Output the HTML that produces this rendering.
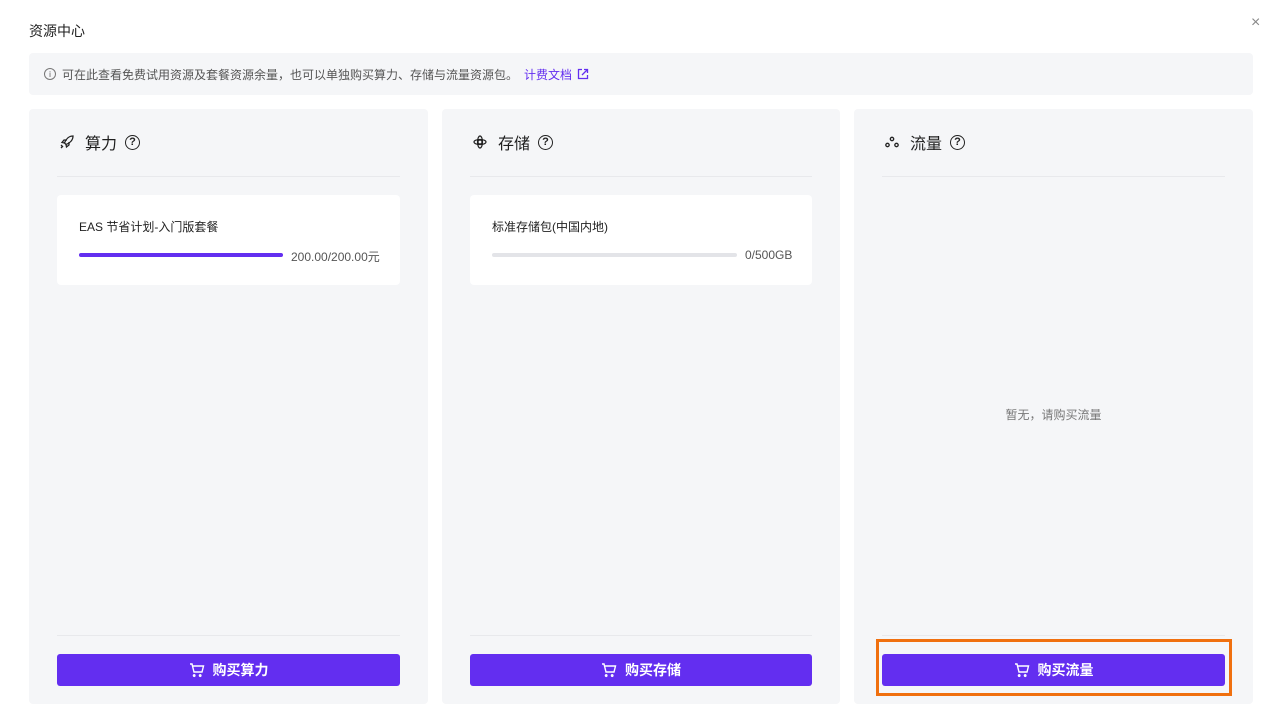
<!DOCTYPE html><html><head><meta charset="utf-8"><style>
*{box-sizing:border-box;margin:0;padding:0}
body{width:1276px;height:713px;background:#fff;font-family:"Liberation Sans","Noto Sans CJK SC",sans-serif;position:relative;overflow:hidden;color:#1f1f1f}
.abs{position:absolute}
.col{position:absolute;top:109px;width:399px;height:595px;background:#f5f6f8;border-radius:4px}
.hd{position:absolute;left:30px;top:21px;font-size:16px;display:flex;align-items:center;gap:10px;height:24px}
.dv{position:absolute;left:28px;right:28px;height:1px;background:#e8e9ec}
.card{position:absolute;left:28px;right:28px;top:86px;height:90px;background:#fff;border-radius:4px}
.btn{position:absolute;left:28px;right:28px;top:545px;height:32px;background:#632ef0;border-radius:3px;color:#fff;font-size:14px;font-weight:bold;display:flex;align-items:center;justify-content:center;gap:8px}
.q{width:15px;height:15px;border:1.5px solid #222;border-radius:50%;font-size:11px;font-weight:bold;display:flex;align-items:center;justify-content:center;margin-left:-2px}
</style></head><body>
<div class="abs" style="left:29px;top:21px;font-size:14px">资源中心</div>
<div class="abs" style="left:1251px;top:14px;font-size:16px;color:#888">×</div>
<div class="abs" style="left:29px;top:53px;width:1224px;height:42px;background:#f5f6f8;border-radius:4px;font-size:12px;color:#555;display:flex;align-items:center;padding-left:15px">
<span style="width:12px;height:12px;border:1px solid #777;border-radius:50%;font-size:8px;display:inline-flex;align-items:center;justify-content:center;margin-right:6px">i</span>可在此查看免费试用资源及套餐资源余量，也可以单独购买算力、存储与流量资源包。<span style="color:#632ef0;margin-left:6px">计费文档</span>
<svg width="12" height="12" viewBox="0 0 12 12" style="margin-left:5px"><path d="M5 1.5H1.5v9h9V7M7 1.5h3.5V5M10.5 1.5 5 7" fill="none" stroke="#632ef0" stroke-width="1.3"/></svg></div>

<div class="col" style="left:29px">
<div class="hd"><svg width="16" height="16" viewBox="0 0 16 16" fill="none" stroke="#222" stroke-width="1.3"><path d="M14 2C10 2 7 5 5.5 9l1.5 1.5C11 9 14 6 14 2zM5.5 9 3 8.5 5 6h3M7 10.5l.5 2.5L10 11V8M4 12l-2 2M3 11l-1 1"/></svg>算力<span class="q">?</span></div>
<div class="dv" style="top:67px"></div>
<div class="card"><div class="abs" style="left:22px;top:23px;font-size:12px">EAS 节省计划-入门版套餐</div>
<div class="abs" style="left:22px;top:58px;width:204px;height:4px;background:#632ef0;border-radius:2px"></div>
<div class="abs" style="left:234px;top:53px;font-size:12px;color:#555">200.00/200.00元</div></div>
<div class="dv" style="top:526px"></div>
<div class="btn"><svg width="16" height="16" viewBox="0 0 16 16" fill="none" stroke="#fff" stroke-width="1.4"><path d="M1 2h2l2 8h8l1.5-6H4M6 13.5a.8.8 0 1 0 0 .1M12 13.5a.8.8 0 1 0 0 .1"/></svg>购买算力</div>
</div>

<div class="col" style="left:442px;width:398px">
<div class="hd"><svg width="16" height="16" viewBox="0 0 16 16" fill="none" stroke="#222" stroke-width="1.2"><circle cx="8" cy="8" r="2"/><ellipse cx="8" cy="8" rx="2.5" ry="6"/><ellipse cx="8" cy="8" rx="6" ry="2.5"/></svg>存储<span class="q">?</span></div>
<div class="dv" style="top:67px"></div>
<div class="card"><div class="abs" style="left:22px;top:23px;font-size:12px">标准存储包(中国内地)</div>
<div class="abs" style="left:22px;top:58px;width:245px;height:4px;background:#e3e4e8;border-radius:2px"></div>
<div class="abs" style="left:275px;top:53px;font-size:12px;color:#555">0/500GB</div></div>
<div class="dv" style="top:526px"></div>
<div class="btn"><svg width="16" height="16" viewBox="0 0 16 16" fill="none" stroke="#fff" stroke-width="1.4"><path d="M1 2h2l2 8h8l1.5-6H4M6 13.5a.8.8 0 1 0 0 .1M12 13.5a.8.8 0 1 0 0 .1"/></svg>购买存储</div>
</div>

<div class="col" style="left:854px">
<div class="hd"><svg width="16" height="16" viewBox="0 0 16 16" fill="none" stroke="#222" stroke-width="1.3"><circle cx="8" cy="5" r="1.7"/><circle cx="3.5" cy="11" r="1.7"/><circle cx="12.5" cy="11" r="1.7"/></svg>流量<span class="q">?</span></div>
<div class="dv" style="top:67px"></div>
<div class="abs" style="left:0;right:0;top:297px;text-align:center;font-size:12px;color:#777">暂无，请购买流量</div>
<div class="dv" style="top:526px"></div>
<div class="btn"><svg width="16" height="16" viewBox="0 0 16 16" fill="none" stroke="#fff" stroke-width="1.4"><path d="M1 2h2l2 8h8l1.5-6H4M6 13.5a.8.8 0 1 0 0 .1M12 13.5a.8.8 0 1 0 0 .1"/></svg>购买流量</div>
</div>
<div class="abs" style="left:876px;top:639px;width:356px;height:57px;border:3px solid #f0700f"></div>
</body></html>
